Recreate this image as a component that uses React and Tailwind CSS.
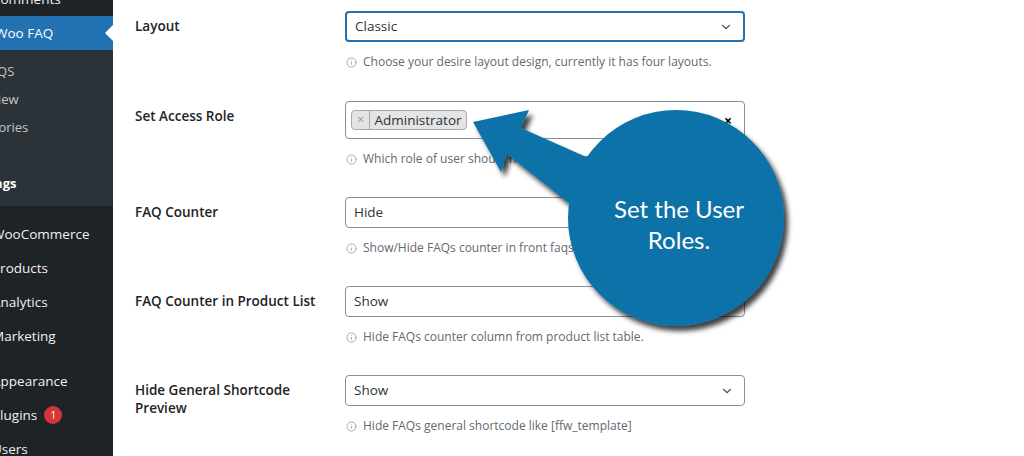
import { ChevronDown, Info } from "lucide-react";

const wpFont = { fontFamily: '"Open Sans", "Noto Sans", sans-serif' };

const SideItem = ({ label, badge, className = "" }) => (
  <div className={`h-[34px] flex items-center text-[13.5px] text-[#f0f0f1] ${className}`}>
    <span className="ml-[-8px] whitespace-nowrap">{label}</span>
    {badge && (
      <span className="ml-[7px] w-[18px] h-[18px] rounded-full bg-[#d63638] text-white text-[10px] flex items-center justify-center">
        {badge}
      </span>
    )}
  </div>
);

const SubItem = ({ label, current }) => (
  <div
    className={`h-7 flex items-center text-[13px] whitespace-nowrap ${
      current ? "font-bold text-white" : "text-[#c3c4c7]"
    }`}
  >
    <span className="ml-[-36px]">{label}</span>
  </div>
);

const Sidebar = () => (
  <div className="w-[113px] shrink-0 bg-[#1d2327] overflow-hidden">
    <SideItem label="Comments" className="mt-[-18px]" />
    <div className="h-[34px] bg-[#2271b1] flex items-center justify-between text-[13.5px] text-white">
      <span className="ml-[-5px] whitespace-nowrap">Woo FAQ</span>
      <span className="w-0 h-0 border-y-[8px] border-y-transparent border-r-[8px] border-r-white" />
    </div>
    <div className="bg-[#2c3338] py-2">
      <SubItem label="All FAQS" />
      <SubItem label="Add New" />
      <SubItem label="Categories" />
      <SubItem label="" />
      <SubItem label="Settings" current />
    </div>
    <SideItem label="WooCommerce" className="mt-[11px]" />
    <SideItem label="Products" />
    <SideItem label="Analytics" />
    <SideItem label="Marketing" />
    <SideItem label="Appearance" className="mt-[11px]" />
    <SideItem label="Plugins" badge="1" />
    <SideItem label="Users" />
  </div>
);

const Desc = ({ children }) => (
  <div className="mt-3 h-4 flex items-center gap-[6px] text-[12px] text-[#646970]">
    <Info size={11} strokeWidth={1.6} className="text-[#8c8f94] ml-[1px]" />
    <span>{children}</span>
  </div>
);

const Select = ({ value, focused }) => (
  <div
    className={`h-[31px] rounded-[4px] flex items-center justify-between px-2 text-[13.5px] text-[#2c3338] bg-white ${
      focused ? "border-2 border-[#2271b1]" : "border border-[#8c8f94]"
    }`}
  >
    <span>{value}</span>
    <ChevronDown size={14} strokeWidth={2} className="text-[#50575e] mr-[2px]" />
  </div>
);

const Row = ({ label, children, last }) => (
  <div className={`flex ${last ? "pb-[31px]" : "pb-[30px]"}`}>
    <div className="w-[210px] shrink-0 pt-[6px] pr-6 text-[13.5px] leading-[18px] font-semibold text-[#1d2327]">
      {label}
    </div>
    <div className="w-[400px]">{children}</div>
  </div>
);

const Callout = () => (
  <>
    <svg className="absolute left-0 top-0 pointer-events-none" width="1024" height="456">
      <defs>
        <filter id="shadow" x="-20%" y="-20%" width="140%" height="140%">
          <feDropShadow dx="4" dy="5" stdDeviation="2.5" floodColor="#000" floodOpacity="0.75" />
        </filter>
      </defs>
      <g filter="url(#shadow)" fill="#0a72a8">
        <polygon points="473,122 529,110 521,128 620,172 600,228 507,154 501,172" />
        <circle cx="676" cy="218" r="108" />
      </g>
    </svg>
    <div
      className="absolute left-[576px] top-[193px] w-[206px] text-center text-white text-[24px] leading-[31px] pointer-events-none"
      style={{ fontFamily: 'Lato, "Open Sans", sans-serif' }}
    >
      Set the User
      <br />
      Roles.
    </div>
  </>
);

export default function App() {
  return (
    <div className="relative w-[1024px] h-[456px] overflow-hidden bg-white flex" style={wpFont}>
      <Sidebar />
      <div className="flex-1 pl-[22px] pt-[11px]">
        <Row label="Layout" last>
          <Select value="Classic" focused />
          <Desc>Choose your desire layout design, currently it has four layouts.</Desc>
        </Row>
        <Row label="Set Access Role">
          <div className="h-[38px] rounded-[4px] border border-[#8c8f94] flex items-center justify-between pl-[5px] pr-[12px]">
            <div className="h-[20px] flex items-center rounded-[4px] border border-[#aaa] bg-[#e4e4e4] text-[13.5px] text-[#2c3338]">
              <span className="px-[5px] text-[#999] text-[13px] border-r border-[#aaa] h-full flex items-center">×</span>
              <span className="px-[4px]">Administrator</span>
            </div>
            <span className="text-[14px] font-bold text-black">×</span>
          </div>
          <Desc>Which role of user should have access to FAQ settings.</Desc>
        </Row>
        <Row label="FAQ Counter">
          <Select value="Hide" />
          <Desc>Show/Hide FAQs counter in front faqs tab.</Desc>
        </Row>
        <Row label="FAQ Counter in Product List">
          <Select value="Show" />
          <Desc>Hide FAQs counter column from product list table.</Desc>
        </Row>
        <Row label="Hide General Shortcode Preview">
          <Select value="Show" />
          <Desc>Hide FAQs general shortcode like [ffw_template]</Desc>
        </Row>
      </div>
      <Callout />
    </div>
  );
}
